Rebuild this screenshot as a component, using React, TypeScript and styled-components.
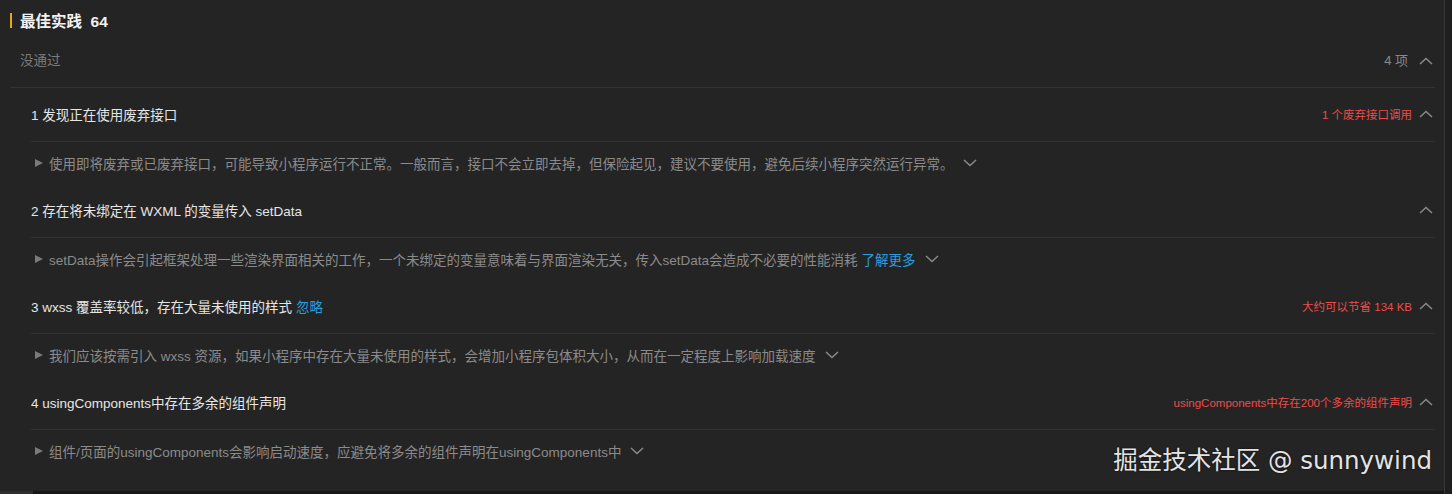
import { styled, createGlobalStyle } from "styled-components";

const GlobalStyle = createGlobalStyle`
  html, body {
    margin: 0;
    padding: 0;
    background-color: #1f1f1f;
    font-family: "Liberation Sans", "Noto Sans CJK SC", sans-serif;
  }
`;

const Page = styled.div`
  position: relative;
  display: flex;
  flex-direction: column;
  width: 1445px;
  height: 494px;
  box-sizing: border-box;
  padding: 0 10px 0 10px;
  background-color: #242424;
  border-right: 1px solid #383838;
  overflow: hidden;
`;

const Title = styled.div`
  height: 40px;
  display: flex;
  align-items: center;
  gap: 8px;
  color: #f2f2f2;
  font-size: 15.5px;
  font-weight: 600;
  &::before {
    content: "";
    width: 2px;
    height: 15px;
    background-color: #e2a91c;
  }
`;

const Section = styled.div`
  width: 1425px;
`;

const GroupHeader = styled.div`
  display: flex;
  align-items: center;
  justify-content: space-between;
  padding: 11px 2px 16px 10px;
  line-height: 20px;
  border-bottom: 1px solid #333;
  color: #7c7c7c;
  font-size: 13.5px;
`;

const Right = styled.div<{ $gap?: number }>`
  display: flex;
  align-items: center;
  gap: ${(p) => p.$gap ?? 7}px;
`;

const Count = styled.span`
  color: #8a8a8a;
  font-size: 13px;
`;

const Item = styled.div`
  padding-left: 21px;
`;

const ItemHead = styled.div`
  height: 54px;
  box-sizing: border-box;
  padding: 0 2px 2px 0;
  display: flex;
  align-items: center;
  justify-content: space-between;
  border-bottom: 1px solid #333;
  color: #e6e6e6;
  font-size: 13.5px;
`;

const Warn = styled.span`
  color: #ef4b4b;
  font-size: 11.5px;
`;

const Link = styled.span`
  color: #2a9fdc;
  margin-left: 4px;
`;

const Desc = styled.div`
  height: 42px;
  box-sizing: border-box;
  padding-left: 4px;
  display: flex;
  align-items: center;
  color: #8b8b8b;
  font-size: 13.5px;
`;

const Arrow = styled.span`
  width: 0;
  height: 0;
  border-top: 4.5px solid transparent;
  border-bottom: 4.5px solid transparent;
  border-left: 8px solid #7a7a7a;
  margin-right: 6px;
`;

const Caret = styled.svg<{ $up?: boolean }>`
  width: 14px;
  height: 8px;
  flex: none;
  margin-left: ${(p) => (p.$up ? "0" : "9px")};
`;

const Watermark = styled.div`
  position: absolute;
  right: 12px;
  bottom: 19px;
  color: #e4e4e4;
  font-family: "DejaVu Sans", "Noto Sans CJK SC", sans-serif;
  font-size: 24.5px;
  line-height: 28px;
  white-space: nowrap;
  text-shadow: 0 0 2px rgba(0, 0, 0, 0.8);
`;

const Scrollbar = styled.div`
  margin: auto -10px 0 -10px;
  height: 3px;
  background-color: #171717;
  &::before {
    content: "";
    display: block;
    width: 33px;
    height: 100%;
    background-color: #2e2e2e;
  }
`;

function Chevron({ up }: { up?: boolean }) {
  return (
    <Caret $up={up} viewBox="0 0 14 8">
      <path
        d={up ? "M1 7 L7 1.5 L13 7" : "M1 1 L7 6.5 L13 1"}
        fill="none"
        stroke="#8a8a8a"
        strokeWidth={1.5}
      />
    </Caret>
  );
}

const items = [
  {
    title: "1 发现正在使用废弃接口",
    warn: "1 个废弃接口调用",
    desc: "使用即将废弃或已废弃接口，可能导致小程序运行不正常。一般而言，接口不会立即去掉，但保险起见，建议不要使用，避免后续小程序突然运行异常。",
  },
  {
    title: "2 存在将未绑定在 WXML 的变量传入 setData",
    desc: "setData操作会引起框架处理一些渲染界面相关的工作，一个未绑定的变量意味着与界面渲染无关，传入setData会造成不必要的性能消耗",
    more: "了解更多",
  },
  {
    title: "3 wxss 覆盖率较低，存在大量未使用的样式",
    titleLink: "忽略",
    warn: "大约可以节省 134 KB",
    desc: "我们应该按需引入 wxss 资源，如果小程序中存在大量未使用的样式，会增加小程序包体积大小，从而在一定程度上影响加载速度",
  },
  {
    title: "4 usingComponents中存在多余的组件声明",
    warn: "usingComponents中存在200个多余的组件声明",
    desc: "组件/页面的usingComponents会影响启动速度，应避免将多余的组件声明在usingComponents中",
  },
];

export default function App() {
  return (
    <Page>
      <GlobalStyle />
      <Title>最佳实践 &nbsp;64</Title>
      <Section>
        <GroupHeader>
          <span>没通过</span>
          <Right $gap={11}>
            <Count>4 项</Count>
            <Chevron up />
          </Right>
        </GroupHeader>
        {items.map((it) => (
          <Item key={it.title}>
            <ItemHead>
              <span>
                {it.title}
                {it.titleLink && <Link>{it.titleLink}</Link>}
              </span>
              <Right $gap={7}>
                {it.warn && <Warn>{it.warn}</Warn>}
                <Chevron up />
              </Right>
            </ItemHead>
            <Desc>
              <Arrow />
              {it.desc}
              {it.more && <Link>{it.more}</Link>}
              <Chevron />
            </Desc>
          </Item>
        ))}
      </Section>
      <Scrollbar />
      <Watermark>掘金技术社区 @ sunnywind</Watermark>
    </Page>
  );
}
